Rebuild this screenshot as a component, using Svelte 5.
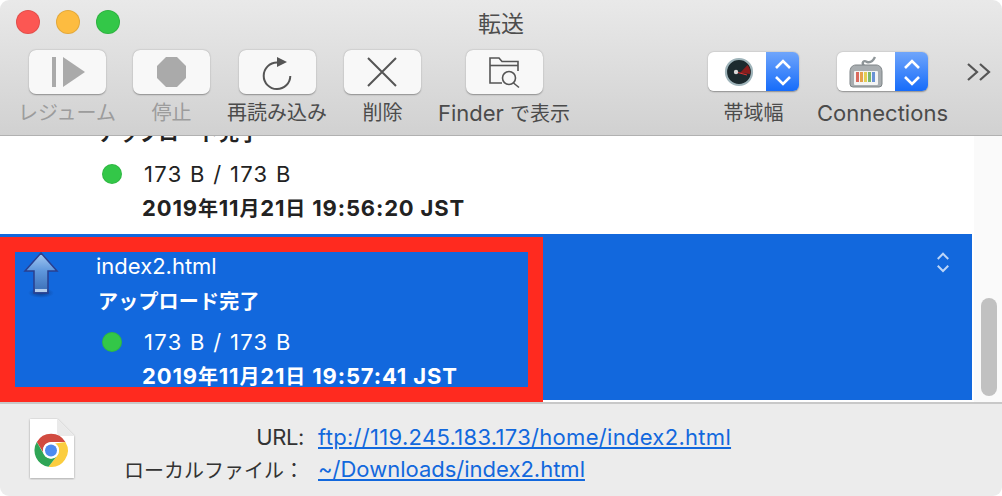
<script>
  const buttons = [
    { label: 'レジューム', kind: 'play', off: true },
    { label: '停止', kind: 'stop', off: true },
    { label: '再読み込み', kind: 'reload' },
    { label: '削除', kind: 'close' },
    { label: 'Finder で表示', kind: 'finder' }
  ];
  // Latin runs are set larger than the kana and kanji around them.
  const segments = (text) =>
    text.split(/([A-Za-z0-9:./ ]+)/).filter(Boolean).map((t) => ({ t, lat: /^[A-Za-z0-9:./ ]/.test(t) }));
</script>

{#snippet mixed(text)}
  {#each segments(text) as s}<span class:lat={s.lat}>{s.t}</span>{/each}
{/snippet}

{#snippet updown(color)}
  <svg class="updown" width="24" height="32" viewBox="0 0 24 32" fill="none" stroke={color} stroke-width="2.6">
    <path d="M5 12 L12 5 L19 12" /><path d="M5 21 L12 28 L19 21" />
  </svg>
{/snippet}

{#snippet transfer(name, date, selected)}
  <div class="row" class:selected>
    <svg class="arrow" width="36" height="46" viewBox="0 0 36 46">
      <defs>
        <linearGradient id="ag-{name}" x1="0" y1="0" x2="0" y2="1">
          <stop offset="0" stop-color="#a5c9f2" />
          <stop offset="0.45" stop-color="#5f97dc" />
          <stop offset="1" stop-color="#3a6cb4" />
        </linearGradient>
        <radialGradient id="as-{name}"><stop offset="0" stop-color="#0a2f6e" stop-opacity=".7" /><stop offset="1" stop-color="#0a2f6e" stop-opacity="0" /></radialGradient>
      </defs>
      <ellipse cx="18" cy="41" rx="13" ry="5" fill="url(#as-{name})" />
      <path d="M18 1 L34 19 L25 19 L25 41 L11 41 L11 19 L2 19 Z" fill="url(#ag-{name})" stroke="#2a3f8f" stroke-width="1.5" />
      <rect x="12" y="37" width="12" height="3" fill="#b4cdec" />
    </svg>
    <div class="name">{name}</div>
    <div class="status">アップロード完了</div>
    <div class="size"><span class="dot"></span><span>173 B / 173 B</span></div>
    <div class="date">{@render mixed(date)}</div>
    {#if selected}
      <span class="row-toggle">{@render updown('#bcd5f7')}</span>
    {/if}
  </div>
{/snippet}

<div class="window">
  <header class="toolbar">
    <div class="titlebar">
      <div class="lights"><i class="red"></i><i class="yellow"></i><i class="green"></i></div>
      <div class="title">転送</div>
    </div>
    <div class="tools">
      <div class="actions">
        {#each buttons as b}
          <div class="tool" class:off={b.off}>
            <div class="btn">
              <svg width="77" height="44" viewBox="0 0 77 44" fill="none" stroke="#555" stroke-width="2">
                {#if b.kind === 'play'}
                  <rect x="23" y="7" width="4" height="30" fill="#aaa" stroke="none" />
                  <path d="M34 7 L56 22 L34 37 Z" fill="#aaa" stroke="none" />
                {:else if b.kind === 'stop'}
                  <path d="M33 7 H44 L53 16 V28 L44 37 H33 L24 28 V16 Z" fill="#aaa" stroke="none" />
                {:else if b.kind === 'reload'}
                  <path d="M38 12.5 A13.3 13.3 0 1 0 51.3 26" />
                  <path d="M38 7 L48 12 L38 17 Z" fill="#555" stroke="none" />
                {:else if b.kind === 'close'}
                  <path d="M24 8 L52 36 M52 8 L24 36" />
                {:else}
                  <g stroke-width="1.6">
                    <path d="M36 33 H24 V8 H33 L36 11.5 H52 V21" />
                    <path d="M24 15.5 H52" />
                    <circle cx="43" cy="28" r="6.5" />
                    <path d="M47.5 33 L53 37.5" />
                  </g>
                {/if}
              </svg>
            </div>
            <span class="label">{@render mixed(b.label)}</span>
          </div>
        {/each}
      </div>
      <div class="popups">
        <div class="tool">
          <div class="popup">
            <div class="face gauge">
              <svg width="32" height="32" viewBox="0 0 32 32">
                <circle cx="16" cy="16" r="13" fill="#1c2a2e" stroke="#9fb4ba" stroke-width="2.2" />
                <path d="M17 17 L24.5 9 A11 11 0 0 1 27 18 Z" fill="#8b1d1d" />
                <path d="M13 16 L24 19" stroke="#d33" stroke-width="1" />
                <circle cx="13" cy="16" r="2.2" fill="#d8d8d8" />
              </svg>
            </div>
            <div class="stepper">{@render updown('#fff')}</div>
          </div>
          <span class="label">帯域幅</span>
        </div>
        <div class="tool">
          <div class="popup">
            <div class="face">
              <svg width="34" height="32" viewBox="0 0 34 32">
                <path d="M15 10 C12 6 15 4 18 6 C21 7 24 5 26 1" fill="none" stroke="#8f9699" stroke-width="2.4" />
                <path d="M7 9 H27 C31 9 33 12 33 16 V28 Q33 31 30 31 H4 Q1 31 1 28 V16 C1 12 3 9 7 9 Z" fill="#a8adb0" stroke="#7d8386" />
                <rect x="5" y="15" width="24" height="14" rx="1" fill="#f4f4f4" />
                <rect x="7" y="16" width="3" height="10" fill="#d96a5e" />
                <rect x="11" y="16" width="3" height="10" fill="#e6a24c" />
                <rect x="15" y="16" width="3" height="10" fill="#e3cf54" />
                <rect x="19" y="16" width="3" height="10" fill="#7cb86a" />
                <rect x="23" y="16" width="3" height="10" fill="#6a93d6" />
              </svg>
            </div>
            <div class="stepper">{@render updown('#fff')}</div>
          </div>
          <span class="label lat">Connections</span>
        </div>
        <svg class="more" width="24" height="20" viewBox="0 0 24 20" fill="none" stroke="#555" stroke-width="2.2">
          <path d="M1 2 L10 10 L1 18" /><path d="M13 2 L22 10 L13 18" />
        </svg>
      </div>
    </div>
  </header>

  <section class="content">
    <div class="list">
      {@render transfer('index.html', '2019年11月21日 19:56:20 JST', false)}
      {@render transfer('index2.html', '2019年11月21日 19:57:41 JST', true)}
    </div>
    <div class="scrollbar"><div class="thumb"></div></div>
    <div class="annotation"></div>
  </section>

  <footer class="info">
    <svg class="doc" width="48" height="62" viewBox="0 0 48 62">
      <defs>
        <filter id="ds" x="-20%" y="-20%" width="140%" height="140%"><feDropShadow dx="0" dy="0.6" stdDeviation="0.8" flood-opacity=".35" /></filter>
      </defs>
      <path d="M2 1 H29 L46 18 V60 H2 Z" fill="#fff" filter="url(#ds)" />
      <path d="M29 1 L46 18 H33 Q29 18 29 14 Z" fill="#eaeaea" />
      <path d="M8.8 24 A16.5 16.5 0 0 1 37.4 24 H23 A8 8 0 0 0 15.6 35 Z" fill="#d14b40" />
      <path d="M37.4 24 A16.5 16.5 0 0 1 20.5 48.8 L30 36.5 A8 8 0 0 0 27 25.5 Z" fill="#fbcd3f" />
      <path d="M20.5 48.8 A16.5 16.5 0 0 1 8.8 24 L16 36.5 A8 8 0 0 0 30 36.5 Z" fill="#2fa556" />
      <circle cx="23" cy="32.5" r="8" fill="#fff" />
      <circle cx="23" cy="32.5" r="6" fill="#4d8bf0" />
    </svg>
    <div class="fields">
      <span class="key lat url-key">URL:</span>
      <a href="#url" class="val url">ftp://119.245.183.173/home/index2.html</a>
      <span class="key">ローカルファイル：</span>
      <a href="#local" class="val">~/Downloads/index2.html</a>
    </div>
  </footer>
</div>

<style>
  :global(body) {
    margin: 0;
    background: #fff;
  }
  .window {
    width: 1002px;
    height: 496px;
    display: flex;
    flex-direction: column;
    position: relative;
    overflow: hidden;
    border-radius: 9px;
    font-family: Inter, "Noto Sans CJK JP", sans-serif;
    font-size: 20px;
    color: #222;
  }
  .lat {
    font-size: 22px;
  }
  .toolbar {
    height: 135px;
    flex: none;
    background: linear-gradient(#e9e9e9, #d1d1d1);
    border-top: 1px solid #f4f4f4;
    border-bottom: 1px solid #b1b1b1;
    margin-top: -1px;
  }
  .titlebar {
    height: 50px;
    display: grid;
    grid-template-columns: 1fr auto 1fr;
    align-items: start;
  }
  .lights {
    display: flex;
    gap: 16px;
    padding: 10px 0 0 16px;
  }
  .lights i {
    width: 24px;
    height: 24px;
    border-radius: 50%;
    box-sizing: border-box;
    border: 1px solid rgba(0, 0, 0, 0.1);
  }
  .red { background: #fc5753; }
  .yellow { background: #fdbc40; }
  .green { background: #33c748; }
  .title {
    grid-column: 2;
    color: #4d4d4d;
    font-size: 23px;
    line-height: 24px;
    padding-top: 12px;
  }
  .tools {
    display: flex;
    justify-content: space-between;
    padding: 0 11px 0 18px;
  }
  .actions {
    display: flex;
    gap: 17px;
  }
  .popups {
    display: flex;
  }
  .tool {
    display: flex;
    flex-direction: column;
    align-items: center;
    color: #4b4b4b;
  }
  .tool.off {
    color: #9c9c9c;
  }
  .label {
    margin-top: 5px;
    line-height: 28px;
    white-space: nowrap;
  }
  .btn {
    width: 77px;
    height: 44px;
    background: #f8f8f8;
    border-radius: 7px;
    box-shadow: 0 0.5px 1.5px rgba(0, 0, 0, 0.35);
  }
  .btn svg {
    display: block;
  }
  .popups .tool {
    margin-right: 19px;
  }
  .popups .tool:first-child {
    margin-right: 18px;
  }
  .popup {
    width: 91px;
    height: 39px;
    margin: 2px 0 3px;
    display: flex;
    border-radius: 6px;
    overflow: hidden;
    box-shadow: 0 0.5px 1.5px rgba(0, 0, 0, 0.35);
  }
  .face {
    width: 58px;
    background: #fff;
    display: flex;
    align-items: center;
    justify-content: center;
  }
  .gauge {
    padding-left: 4px;
    width: 54px;
  }
  .stepper {
    width: 33px;
    background: linear-gradient(#6fa5fb, #166cfa);
    display: flex;
    align-items: center;
    justify-content: center;
  }
  .more {
    margin-top: 12px;
  }
  .content {
    flex: 1;
    min-height: 0;
    display: flex;
    position: relative;
    background: #fff;
    border-bottom: 2px solid #c8c8c8;
  }
  .list {
    width: 972px;
    display: flex;
    flex-direction: column;
    justify-content: flex-end;
    overflow: hidden;
    padding-bottom: 2px;
    box-sizing: border-box;
  }
  .row {
    height: 166px;
    margin-top: 2px;
    flex: none;
    position: relative;
    box-sizing: border-box;
    padding: 16px 0 0 96px;
    color: #222;
  }
  .row.selected {
    background: #1268dd;
    color: #fff;
  }
  .arrow {
    position: absolute;
    left: 23px;
    top: 18px;
  }
  .name {
    line-height: 32px;
    font-size: 22px;
  }
  .status {
    line-height: 32px;
    margin-top: 4px;
    font-weight: 700;
    padding-left: 2px;
    letter-spacing: 0.2px;
  }
  .size {
    display: flex;
    align-items: center;
    gap: 22px;
    line-height: 32px;
    margin-top: 8px;
    padding-left: 6px;
    font-size: 22px;
    letter-spacing: 1.3px;
  }
  .dot {
    width: 20px;
    height: 20px;
    border-radius: 50%;
    background: #33c748;
    box-shadow: inset 0 0 0 1px rgba(0, 0, 0, 0.08);
  }
  .date {
    line-height: 32px;
    margin-top: 2px;
    padding-left: 46px;
    font-weight: 700;
    white-space: nowrap;
    letter-spacing: 0.85px;
  }
  .row-toggle {
    position: absolute;
    right: 20px;
    top: 16px;
  }
  .updown {
    display: block;
  }
  .row-toggle .updown {
    width: 18px;
    height: 24px;
  }
  .scrollbar {
    flex: 1;
    background: #fafafa;
    border-left: 2px solid #fff;
    display: flex;
    align-items: flex-end;
    justify-content: center;
    padding-bottom: 6px;
  }
  .thumb {
    width: 16px;
    height: 98px;
    border-radius: 8px;
    background: #c1c1c1;
    margin-left: 2px;
  }
  .annotation {
    position: absolute;
    left: 0;
    top: 101px;
    width: 513px;
    height: 135px;
    border: 15px solid #ff2a1f;
    box-sizing: content-box;
    pointer-events: none;
  }
  .info {
    height: 92px;
    flex: none;
    background: #ececec;
    display: flex;
    box-sizing: border-box;
    padding: 14px 0 0 28px;
  }
  .doc {
    flex: none;
  }
  .fields {
    width: 655px;
    display: grid;
    grid-template-columns: 228px 1fr;
    column-gap: 14px;
    grid-auto-rows: 32px;
    align-items: center;
    align-content: start;
    padding-top: 3px;
  }
  .key {
    text-align: right;
    color: #333;
  }
  .url-key {
    letter-spacing: -0.4px;
  }
  .val {
    color: #1268dd;
    text-decoration: underline;
    white-space: nowrap;
    font-size: 22px;
  }
  .url {
    letter-spacing: 0.3px;
  }
</style>
